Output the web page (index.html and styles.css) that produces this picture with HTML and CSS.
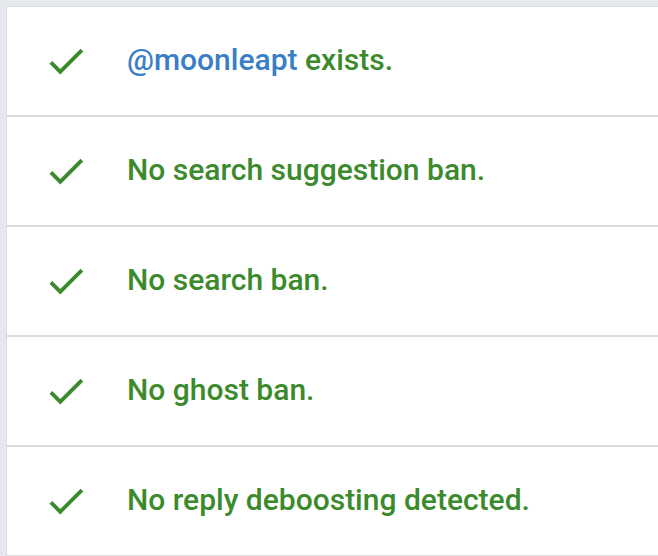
FILE: index.html
```html
<!DOCTYPE html>
<html>
<head>
<meta charset="utf-8">
<link rel="stylesheet" href="styles.css">
</head>
<body>
<div class="panel">
  <div class="row">
    <svg class="check" viewBox="0 0 24 24"><path d="M9 16.17L4.83 12l-1.42 1.41L9 19 21 7l-1.41-1.41z"/></svg>
    <span class="msg"><span class="user">@moonleapt</span> exists.</span>
  </div>
  <div class="row">
    <svg class="check" viewBox="0 0 24 24"><path d="M9 16.17L4.83 12l-1.42 1.41L9 19 21 7l-1.41-1.41z"/></svg>
    <span class="msg">No search suggestion ban.</span>
  </div>
  <div class="row">
    <svg class="check" viewBox="0 0 24 24"><path d="M9 16.17L4.83 12l-1.42 1.41L9 19 21 7l-1.41-1.41z"/></svg>
    <span class="msg">No search ban.</span>
  </div>
  <div class="row">
    <svg class="check" viewBox="0 0 24 24"><path d="M9 16.17L4.83 12l-1.42 1.41L9 19 21 7l-1.41-1.41z"/></svg>
    <span class="msg">No ghost ban.</span>
  </div>
  <div class="row">
    <svg class="check" viewBox="0 0 24 24"><path d="M9 16.17L4.83 12l-1.42 1.41L9 19 21 7l-1.41-1.41z"/></svg>
    <span class="msg">No reply deboosting detected.</span>
  </div>
</div>
</body>
</html>
```
FILE: styles.css
```css
html, body {
  margin: 0;
  padding: 0;
}
body {
  background: #e5e9ed;
  padding: 6px 0 0 6px;
  height: 556px;
  box-sizing: border-box;
  overflow: hidden;
  font-family: Roboto, "Liberation Sans", sans-serif;
}
.panel {
  background: #fff;
  border-left: 1px solid #d8dde2;
  border-top: 1px solid #d8dde2;
}
.row {
  display: flex;
  align-items: center;
  height: 108px;
  border-bottom: 2px solid #dcdcdc;
}
.check {
  width: 46px;
  height: 46px;
  fill: #3b8a2b;
  margin-left: 36px;
  flex: none;
}
.msg {
  margin-left: 38px;
  margin-bottom: 4px;
  font-size: 30px;
  font-weight: 500;
  color: #3b8a2b;
}
.user {
  color: #3a7ec6;
}
```
